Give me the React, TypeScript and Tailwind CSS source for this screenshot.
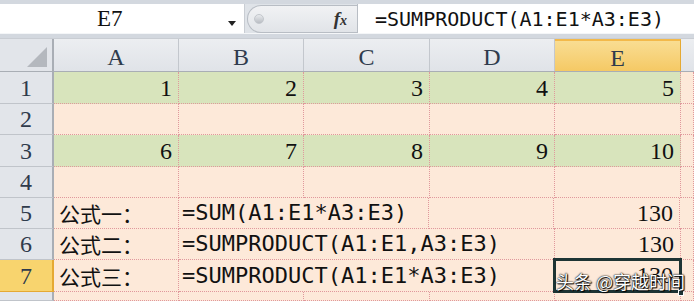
import React from 'react';

const serif = 'font-["Liberation_Serif",serif]';
const mono = 'font-["DejaVu_Sans_Mono",monospace]';
const cjk = 'font-["Noto_Sans_CJK_SC",sans-serif]';

const colW = ['w-[125px]', 'w-[125px]', 'w-[126px]', 'w-[125px]', 'w-[126px]'];
const rowH = ['h-[32px]', 'h-[31px]', 'h-[32px]', 'h-[31px]', 'h-[31px]', 'h-[31px]', 'h-[32px]', 'h-[9px]'];

const gridLine = 'border-r border-b border-dotted border-[#e0989c]';

const ColHeader = ({ label, w, active }: { label: string; w: string; active?: boolean }) => (
  <div
    className={`${w} h-full shrink-0 flex items-center justify-center border-r ${
      active
        ? 'bg-gradient-to-b from-[#f9dd92] to-[#f5c964] border-[#e5a933] border-t-2 border-t-[#f3b94a]'
        : 'bg-gradient-to-b from-[#eceef1] to-[#e0e3e8] border-[#c3c7cd]'
    }`}
  >
    <span className={`${serif} text-[24px] leading-none text-[#2f3b4c] mt-[3px]`}>{label}</span>
  </div>
);

const RowHeader = ({ n, h, active }: { n?: number; h: string; active?: boolean }) => (
  <div
    className={`${h} w-[54px] shrink-0 flex items-end justify-center border-r-2 border-b overflow-hidden ${
      active ? 'bg-[#f8d46e] border-r-[#e5a933] border-b-[#e5a933]' : 'bg-[#e2e5ea] border-r-[#a9aeb5] border-b-[#c0c4ca]'
    }`}
  >
    {n !== undefined && <span className={`${serif} text-[24px] leading-none text-[#2f3b4c] pb-[3px]`}>{n}</span>}
  </div>
);

const Num = ({ v }: { v: string | number }) => (
  <span className={`${serif} text-[24px] leading-none text-[#111] pr-[6px] pb-[3px] ml-auto`}>{v}</span>
);

const Cell = ({ w, bg, children }: { w: string; bg: string; children?: React.ReactNode }) => (
  <div className={`${w} h-full shrink-0 flex items-end whitespace-nowrap ${bg} ${gridLine}`}>{children}</div>
);

const Label = ({ t }: { t: string }) => (
  <span className={`${cjk} text-[21px] leading-none text-[#111] pl-[5px] pb-[4px]`}>{t}</span>
);

const Formula = ({ t }: { t: string }) => (
  <span className={`${mono} text-[22px] leading-none text-[#111] pl-[3px] pb-[4px]`}>{t}</span>
);

export default function App() {
  const green = 'bg-[#d8e4bc]';
  const peach = 'bg-[#fde9d9]';

  const numRow = (vals: (number | string)[]) => (
    <>
      {vals.map((v, i) => (
        <Cell key={i} w={colW[i]} bg={green}>
          <Num v={v} />
        </Cell>
      ))}
      <Cell w="flex-1" bg={peach} />
    </>
  );

  const emptyRow = () => (
    <>
      {colW.map((w, i) => (
        <Cell key={i} w={w} bg={peach} />
      ))}
      <Cell w="flex-1" bg={peach} />
    </>
  );

  const rows: React.ReactNode[] = [
    numRow([1, 2, 3, 4, 5]),
    emptyRow(),
    numRow([6, 7, 8, 9, 10]),
    emptyRow(),
    <>
      <Cell w={colW[0]} bg={peach}>
        <Label t="公式一：" />
      </Cell>
      <Cell w="w-[250px]" bg={peach}>
        <Formula t="=SUM(A1:E1*A3:E3)" />
      </Cell>
      <Cell w={colW[3]} bg={peach} />
      <Cell w={colW[4]} bg={peach}>
        <Num v={130} />
      </Cell>
      <Cell w="flex-1" bg={peach} />
    </>,
    <>
      <Cell w={colW[0]} bg={peach}>
        <Label t="公式二：" />
      </Cell>
      <Cell w="w-[376px]" bg={peach}>
        <Formula t="=SUMPRODUCT(A1:E1,A3:E3)" />
      </Cell>
      <Cell w={colW[4]} bg={peach}>
        <Num v={130} />
      </Cell>
      <Cell w="flex-1" bg={peach} />
    </>,
    <>
      <Cell w={colW[0]} bg={peach}>
        <Label t="公式三：" />
      </Cell>
      <Cell w="w-[376px]" bg={peach}>
        <Formula t="=SUMPRODUCT(A1:E1*A3:E3)" />
      </Cell>
      <div className={`${colW[4]} h-full shrink-0 relative ${peach} ${gridLine}`}>
        <div className="absolute inset-[-2px] border-[3px] border-[#1d3434] flex items-end">
          <Num v={130} />
        </div>
        <div className="absolute right-[-4px] bottom-[-5px] w-[6px] h-[6px] bg-[#1d3434] border border-white" />
        <span
          className={`${cjk} absolute left-[1px] bottom-[1px] text-[18px] leading-none text-white whitespace-nowrap [text-shadow:0_0_2px_#000,0_0_1px_#000,1px_1px_1px_#000]`}
        >
          头条 @穿越时间
        </span>
      </div>
      <Cell w="flex-1" bg={peach} />
    </>,
    emptyRow(),
  ];

  return (
    <div className="w-[694px] h-[301px] overflow-hidden bg-[#dde1e7] select-none">
      {/* formula bar */}
      <div className="h-[38px] pt-[4px] bg-[#d3d8df]">
        <div className="h-[30px] flex border-b border-[#f4f6f8] bg-[#dfe3e8]">
          <div className="w-[245px] h-full bg-white flex items-center relative border-r border-[#c9cdd3]">
            <span className={`${serif} text-[23px] leading-none text-[#111] ml-[97px]`}>E7</span>
            <svg className="absolute left-[228px] top-[17px]" width="8" height="5" viewBox="0 0 8 5">
              <path d="M0 0h8L4 5z" fill="#222" />
            </svg>
          </div>
          <div className="flex-1 flex items-center">
            <div className="ml-[2px] w-[110px] h-[28px] rounded-l-[14px] border border-r-0 border-[#b8bdc4] bg-gradient-to-b from-[#f1f2f4] to-[#e1e4e8] flex items-center">
              <div className="ml-[6px] w-[10px] h-[10px] rounded-full bg-gradient-to-b from-[#e8eaed] to-[#b9bdc3] border border-[#c3c7cc]" />
              <span className={`${serif} ml-auto mr-[10px] italic font-bold text-[19px] leading-none text-[#333]`}>
                f<span className="text-[14px]">x</span>
              </span>
            </div>
            <div className="flex-1 h-full bg-white border-l border-[#b8bdc4] flex items-center">
              <span className={`${mono} text-[20px] leading-none text-[#111] ml-[17px]`}>=SUMPRODUCT(A1:E1*A3:E3)</span>
            </div>
          </div>
        </div>
      </div>

      {/* column headers */}
      <div className="h-[34px] flex border-t border-[#c9cdd3] border-b border-b-[#a9aeb5]">
        <div className="w-[54px] h-full shrink-0 bg-[#e2e5ea] border-r-2 border-[#a9aeb5] relative">
          <svg className="absolute right-[5px] bottom-[4px]" width="20" height="20" viewBox="0 0 20 20">
            <path d="M20 0V20H0z" fill="#b4b8be" />
          </svg>
        </div>
        {['A', 'B', 'C', 'D', 'E'].map((c, i) => (
          <ColHeader key={c} label={c} w={colW[i]} active={c === 'E'} />
        ))}
        <div className="flex-1 h-full bg-gradient-to-b from-[#eceef1] to-[#e0e3e8]" />
      </div>

      {/* rows */}
      {rows.map((r, i) => (
        <div key={i} className={`${rowH[i]} flex`}>
          <RowHeader n={i < 7 ? i + 1 : undefined} h="h-full" active={i === 6} />
          {r}
        </div>
      ))}
    </div>
  );
}
